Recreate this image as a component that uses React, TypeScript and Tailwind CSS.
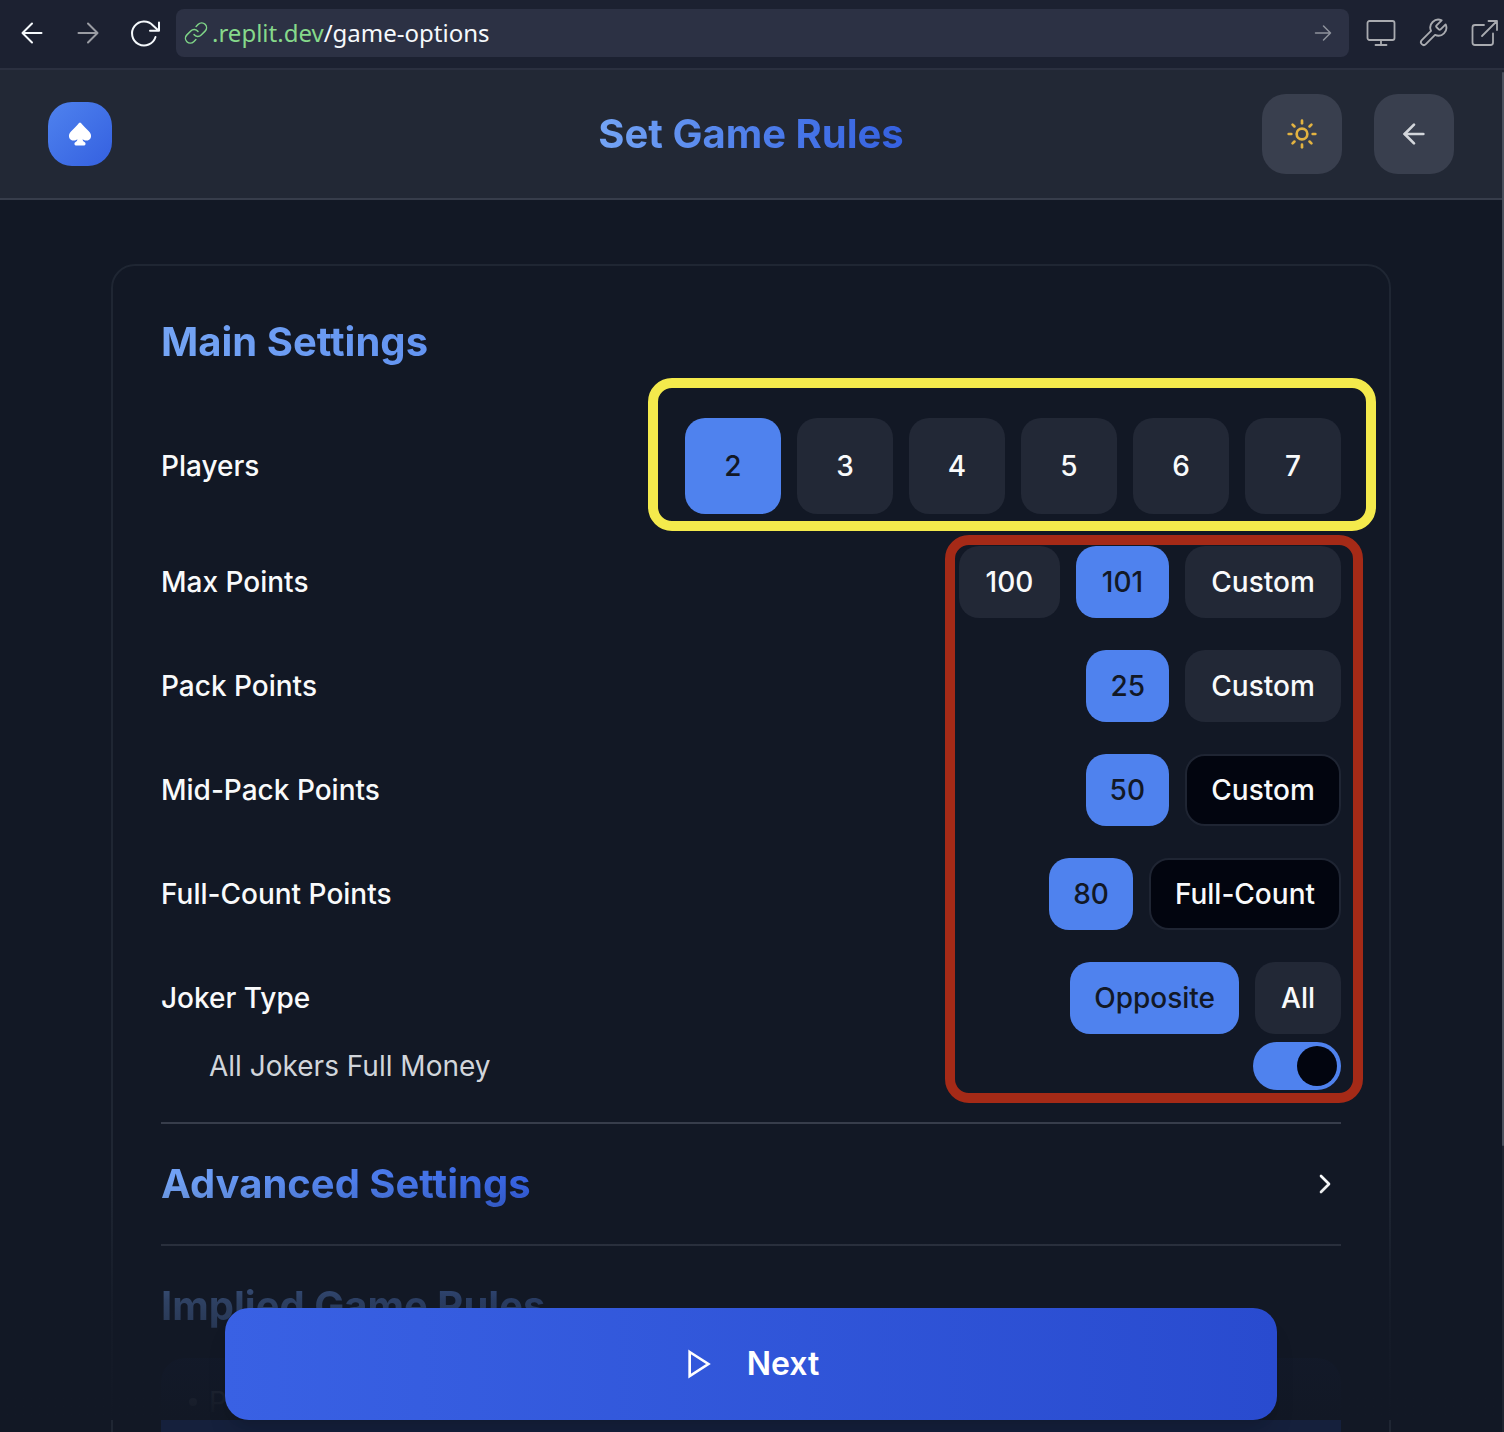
import type { ReactNode } from "react";
import { ArrowLeft, ChevronRight, Sun } from "lucide-react";

type Tone = "selected" | "muted" | "outline";

const tones: Record<Tone, string> = {
  selected: "bg-[#4f82ee] px-6 text-[#121826]",
  muted: "bg-[#222836] px-[26px] text-[#f9fafb]",
  outline: "border-2 border-[#1f2533] bg-[#02050f] px-6 text-[#f9fafb]",
};

function Option({ tone, width = "", children }: { tone: Tone; width?: string; children: ReactNode }) {
  return (
    <button type="button" className={`h-[72px] rounded-[20px] text-[28px] font-medium ${tones[tone]} ${width}`}>
      {children}
    </button>
  );
}

function Row({ label, children }: { label: string; children: ReactNode }) {
  return (
    <div role="group" aria-label={label} className="flex items-center justify-between">
      <span className="text-[28px] font-medium">{label}</span>
      <div className="flex gap-4">{children}</div>
    </div>
  );
}

function BrowserBar() {
  return (
    <div className="flex h-[70px] shrink-0 items-center border-b-2 border-[#2b3040] bg-[#1c2131] pb-0.5 text-[#f5f9fc]">
      <button type="button" aria-label="Back" className="ml-4 size-8">
        <svg viewBox="0 0 32 32" className="size-8" fill="none" stroke="currentColor" strokeWidth="2" strokeLinecap="round" strokeLinejoin="round">
          <path d="M25.500 16H7M16 6.500L6.500 16l9.500 9.500" />
        </svg>
      </button>
      <button type="button" aria-label="Forward" className="ml-6 size-8 text-[#9a9ca3]">
        <svg viewBox="0 0 32 32" className="size-8" fill="none" stroke="currentColor" strokeWidth="2" strokeLinecap="round" strokeLinejoin="round">
          <path d="M6.500 16H25M16 6.500l9.500 9.500-9.500 9.500" />
        </svg>
      </button>
      <button type="button" aria-label="Reload" className="ml-6 size-8">
        <svg viewBox="0 0 32 32" className="size-8" fill="none" stroke="currentColor" strokeWidth="2" strokeLinecap="round" strokeLinejoin="round">
          <path d="M27.500 20A12 12 0 1 1 25 8.500L30.500 13.500M31 5.500v8.300h-9" />
        </svg>
      </button>
      <div className="ml-4 flex h-12 min-w-0 flex-1 items-center rounded-lg bg-[#2c3144] pr-4 pl-2">
        <svg viewBox="0 0 24 24" className="size-6" fill="none" stroke="#7fd487" strokeWidth="1.500" strokeLinecap="round" strokeLinejoin="round">
          <path d="M10 13.500a4.800 4.800 0 0 0 7.200.5l3.900-3.900a4.800 4.800 0 0 0-6.800-6.800l-2.200 2.200" />
          <path d="M14 10.500a4.800 4.800 0 0 0-7.200-.5l-3.900 3.900a4.800 4.800 0 0 0 6.800 6.800l2.200-2.200" />
        </svg>
        <p className="ml-1 flex-1 font-['Noto_Sans',sans-serif] text-2xl">
          <span className="text-[#86d98b]">.replit.dev</span>/game-options
        </p>
        <button type="button" aria-label="Go" className="size-5 text-[#8e929c]">
          <svg viewBox="0 0 20 20" className="size-5" fill="none" stroke="currentColor" strokeWidth="1.500" strokeLinecap="round" strokeLinejoin="round">
            <path d="M2.500 10h15M10.500 3l7 7-7 7" />
          </svg>
        </button>
      </div>
      <div className="ml-4 flex gap-5 text-[#a9abb0]">
        <button type="button" aria-label="Device view" className="size-8">
          <svg viewBox="0 0 32 32" className="size-8" fill="none" stroke="currentColor" strokeWidth="1.800" strokeLinecap="round" strokeLinejoin="round">
            <rect x="2.500" y="4" width="27" height="19" rx="2" />
            <path d="M16 23v5M10.500 28h11" />
          </svg>
        </button>
        <button type="button" aria-label="Developer tools" className="size-8">
          <svg viewBox="0 0 24 24" className="size-8" fill="none" stroke="currentColor" strokeWidth="1.400" strokeLinecap="round" strokeLinejoin="round">
            <path d="M14.700 6.300a1 1 0 0 0 0 1.400l1.600 1.600a1 1 0 0 0 1.400 0l3.770-3.770a6 6 0 0 1-7.940 7.940l-6.910 6.910a2.120 2.120 0 0 1-3-3l6.910-6.910a6 6 0 0 1 7.940-7.940l-3.760 3.760z" />
          </svg>
        </button>
        <button type="button" aria-label="Open in new tab" className="mr-[3px] size-8">
          <svg viewBox="0 0 32 32" className="size-8" fill="none" stroke="currentColor" strokeWidth="1.800" strokeLinecap="round" strokeLinejoin="round">
            <path d="M15 8H6a2.500 2.500 0 0 0-2.500 2.500v15A2.500 2.500 0 0 0 6 28h15.500A2.500 2.500 0 0 0 24 25.500v-9M19.500 4H28v9M27.500 4.500L13 19" />
          </svg>
        </button>
      </div>
    </div>
  );
}

function Header() {
  return (
    <header className="grid shrink-0 grid-cols-[1fr_auto_1fr] items-center border-b-2 border-[#373d4b] bg-[#222835] px-12 py-6">
      <div className="flex size-16 items-center justify-center rounded-3xl bg-linear-to-br from-[#4f82ee] to-[#3560e0]">
        <svg viewBox="0 0 24 24" className="size-6" fill="white">
          <path d="M12 0.500C12.600 0.500 13.200 1.300 14 2.300C16 4.700 18.500 6.900 20.800 9.200c2 2 2.600 4.200 2.100 6-.8 3.300-5.300 4.600-8.300 2.100 0 1.300 1 2.300 2.200 3 1.200.6 1 3.200-.5 3.200H7.700c-1.500 0-1.700-2.600-.5-3.200 1.200-.7 2.200-1.700 2.200-3-3 2.500-7.500 1.200-8.300-2.100-.5-1.800.1-4 2.100-6C5.500 6.900 8 4.700 10 2.300c.8-1 1.400-1.800 2-1.800z" />
        </svg>
      </div>
      <h1 className="bg-linear-to-r from-[#74a4f5] via-[#4f7feb] to-[#3560e0] bg-clip-text text-[40px] leading-[56px] font-bold text-transparent">
        Set Game Rules
      </h1>
      <div className="flex justify-end gap-8">
        <button type="button" aria-label="Toggle theme" className="flex size-20 items-center justify-center rounded-3xl bg-[#393f4e] text-[#e3b341]">
          <Sun size={32} />
        </button>
        <button type="button" aria-label="Go back" className="flex size-20 items-center justify-center rounded-3xl bg-[#393f4e] text-[#d3d6db]">
          <ArrowLeft size={32} />
        </button>
      </div>
    </header>
  );
}

function Settings() {
  const players = [2, 3, 4, 5, 6, 7];
  return (
    <section className="mx-auto w-full max-w-[1280px] rounded-3xl border-2 border-[#1f2633] p-12">
      <h2 className="bg-linear-to-r from-[#74a4f5] via-[#4f7feb] to-[#3560e0] bg-clip-text text-[40px] leading-[56px] font-bold text-transparent">
        Main Settings
      </h2>
      <div role="group" aria-label="Players" className="mt-12 flex items-center justify-between">
        <span className="text-[28px] font-medium">Players</span>
        <div className="relative flex gap-4">
          {players.map((n) => (
            <button
              key={n}
              type="button"
              className={`size-24 rounded-[20px] text-[28px] font-medium ${n === 2 ? "bg-[#4f82ee] text-[#121826]" : "bg-[#222836]"}`}
            >
              {n}
            </button>
          ))}
          <div className="pointer-events-none absolute -top-10 -right-[35px] -bottom-[17px] -left-[37px] rounded-3xl border-10 border-[#f4ea4c]" />
        </div>
      </div>
      <div className="relative mt-8 flex flex-col gap-8">
        <Row label="Max Points">
          <Option tone="muted" width="min-w-[101px]">100</Option>
          <Option tone="selected" width="min-w-[93px]">101</Option>
          <Option tone="muted" width="min-w-[156px]">Custom</Option>
        </Row>
        <Row label="Pack Points">
          <Option tone="selected">25</Option>
          <Option tone="muted" width="min-w-[156px]">Custom</Option>
        </Row>
        <Row label="Mid-Pack Points">
          <Option tone="selected">50</Option>
          <Option tone="outline" width="min-w-[156px]">Custom</Option>
        </Row>
        <Row label="Full-Count Points">
          <Option tone="selected">80</Option>
          <Option tone="outline">Full-Count</Option>
        </Row>
        <div className="flex flex-col gap-2">
          <Row label="Joker Type">
            <Option tone="selected">Opposite</Option>
            <Option tone="muted">All</Option>
          </Row>
          <div className="flex h-12 items-center justify-between pl-12">
            <label htmlFor="full-money" className="text-[28px] text-[#d1d5db]">
              All Jokers Full Money
            </label>
            <input
              id="full-money"
              type="checkbox"
              role="switch"
              defaultChecked
              className="h-12 w-[88px] appearance-none rounded-full bg-[#4f82ee] p-1 before:block before:size-10 before:rounded-full before:bg-[#02050f] checked:before:ml-10"
            />
          </div>
        </div>
        <div className="pointer-events-none absolute -top-[11px] -right-[22px] -bottom-[13px] w-[418px] rounded-3xl border-10 border-[#a52a17]" />
      </div>
      <div className="mt-8 border-t-2 border-[#373d4b]">
        <button type="button" className="flex h-[120px] w-full items-center justify-between">
          <span className="bg-linear-to-r from-[#74a4f5] via-[#4f7feb] to-[#3560e0] bg-clip-text text-[40px] leading-[56px] font-bold text-transparent">
            Advanced Settings
          </span>
          <ChevronRight size={32} />
        </button>
      </div>
      <div className="border-t-2 border-[#373d4b] pt-8">
        <h2 className="bg-linear-to-r from-[#74a4f5] via-[#4f7feb] to-[#3560e0] bg-clip-text text-[40px] leading-[56px] font-bold text-transparent">
          Implied Game Rules
        </h2>
        <ul className="mt-6 h-60 rounded-3xl bg-[#15203c] px-7 py-6 text-[28px] leading-10 text-gray-400">
          <li className="flex items-center gap-3 before:size-2 before:rounded-full before:bg-gray-400">P</li>
        </ul>
      </div>
    </section>
  );
}

export default function App() {
  return (
    <div className="flex h-screen flex-col overflow-hidden bg-[#121825] font-[Inter,sans-serif] text-[#f9fafb]">
      <BrowserBar />
      <div className="flex min-h-0 flex-1">
        <div className="relative flex min-w-0 flex-1 flex-col">
          <Header />
          <main className="min-h-0 flex-1 overflow-hidden px-12 pt-16">
            <Settings />
          </main>
          <div className="absolute inset-x-0 bottom-3 bg-linear-to-t from-[#121825] via-[#121825]/70 to-transparent px-12 pt-32">
            <button
              type="button"
              className="mx-auto flex h-28 w-full max-w-[1052px] items-center justify-center gap-8 rounded-3xl bg-linear-to-r from-[#3961e4] to-[#294bcf] text-[32px] font-semibold text-white shadow-xl"
            >
              <svg viewBox="0 0 24 24" className="size-8" fill="none" stroke="currentColor" strokeWidth="2">
                <path d="M5 3l14 9-14 9z" />
              </svg>
              Next
            </button>
          </div>
        </div>
        <div className="w-[2px] bg-[#1f2430] pt-[2px]">
          <div className="h-[79%] rounded-full bg-[#4a505c]" />
        </div>
      </div>
    </div>
  );
}
